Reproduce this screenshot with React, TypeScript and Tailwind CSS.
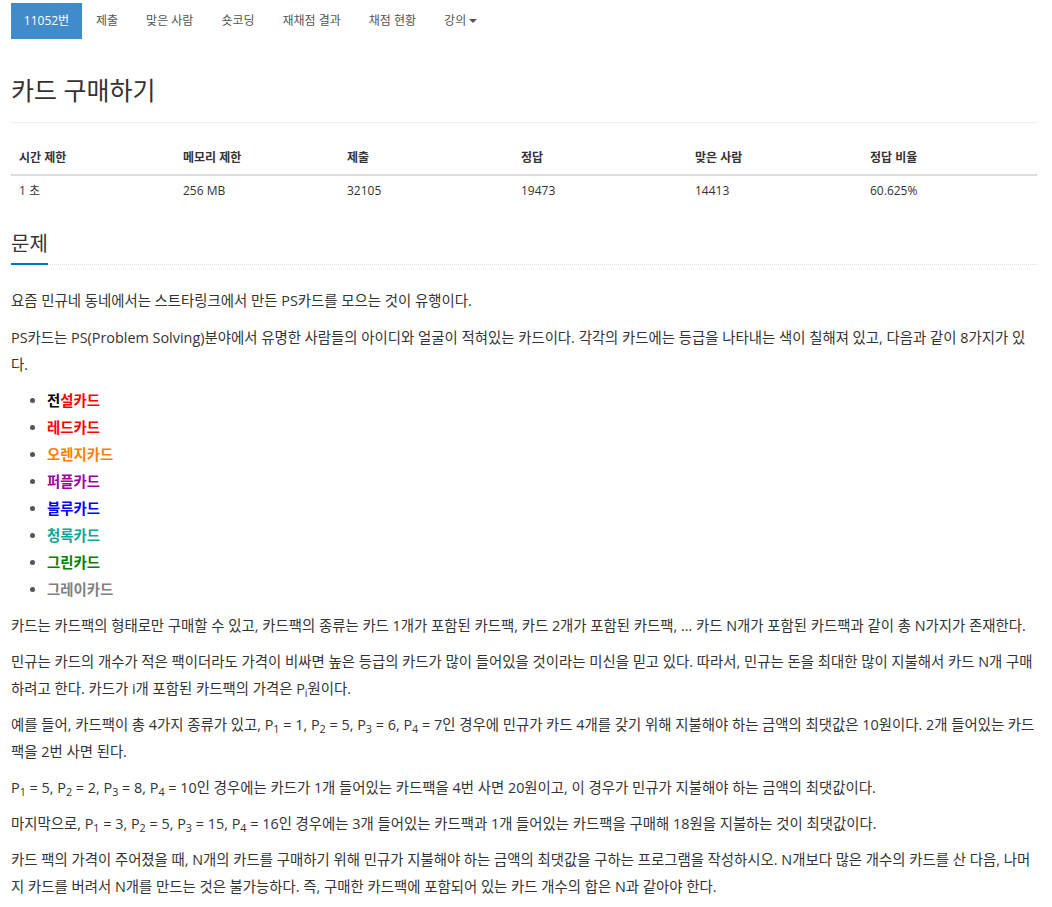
import React from "react";

const navItems = ["제출", "맞은 사람", "숏코딩", "재채점 결과", "채점 현황"];

const cards: { parts: { t: string; c: string }[] }[] = [
  { parts: [{ t: "전", c: "text-[#000000]" }, { t: "설카드", c: "text-[#ff0000]" }] },
  { parts: [{ t: "레드카드", c: "text-[#ff0000]" }] },
  { parts: [{ t: "오렌지카드", c: "text-[#ff8000]" }] },
  { parts: [{ t: "퍼플카드", c: "text-[#a000a0]" }] },
  { parts: [{ t: "블루카드", c: "text-[#0000ff]" }] },
  { parts: [{ t: "청록카드", c: "text-[#10a49a]" }] },
  { parts: [{ t: "그린카드", c: "text-[#008000]" }] },
  { parts: [{ t: "그레이카드", c: "text-[#808080]" }] },
];

function P({ n }: { n: string }) {
  return (
    <>
      P<sub>{n}</sub>
    </>
  );
}

export default function App() {
  return (
    <div className="min-h-[907px] bg-white pl-[11px] pr-[15px] text-[#333] font-['Open_Sans','Noto_Sans_CJK_KR',sans-serif]">
      <nav className="flex items-center pt-[3px] text-[12px]">
        <div className="flex h-[36px] w-[71px] items-center justify-center bg-[#428bca] text-white">11052번</div>
        {navItems.map((n) => (
          <div key={n} className="flex h-[36px] items-center px-[14px] text-[#555]">
            {n}
          </div>
        ))}
        <div className="flex h-[36px] items-center px-[14px] text-[#555]">
          강의
          <span className="ml-[3px] inline-block h-0 w-0 border-x-[4px] border-t-[4px] border-x-transparent border-t-[#555]" />
        </div>
      </nav>

      <h1 className="mt-[36px] border-b border-[#eee] pb-[17px] text-[25px] leading-[30px] font-normal text-[#333]">
        카드 구매하기
      </h1>

      <table className="mt-[17px] w-full border-collapse text-[12px]">
        <thead>
          <tr>
            {["시간 제한", "메모리 제한", "제출", "정답", "맞은 사람", "정답 비율"].map((h, i) => (
              <th
                key={h}
                className={
                  "border-b-2 border-[#ddd] px-[8px] pt-[8px] pb-[6px] text-left font-bold leading-[20px] " +
                  ["w-[164px]", "w-[164px]", "w-[174px]", "w-[174px]", "w-[175px]", ""][i]
                }
              >
                {h}
              </th>
            ))}
          </tr>
        </thead>
        <tbody>
          <tr>
            {["1 초", "256 MB", "32105", "19473", "14413", "60.625%"].map((v) => (
              <td key={v} className="px-[8px] pt-[5px] pb-[8px] leading-[20px]">
                {v}
              </td>
            ))}
          </tr>
        </tbody>
      </table>

      <div className="mt-[21px] border-b border-dotted border-[#ddd]">
        <h2 className="-mb-px inline-block border-b-2 border-[#0076c0] pb-[5px] text-[20px] leading-[28px] font-normal">
          문제
        </h2>
      </div>

      <div className="mt-[22px] text-[14.4px] leading-[27px]">
        <p className="mb-[10px]">요즘 민규네 동네에서는 스트타링크에서 만든 PS카드를 모으는 것이 유행이다.</p>
        <p className="mb-[9px]">
          PS카드는 PS(Problem Solving)분야에서 유명한 사람들의 아이디와 얼굴이 적혀있는 카드이다. 각각의 카드에는 등급을 나타내는 색이 칠해져 있고, 다음과 같이 8가지가 있다.
        </p>
        <ul className="mb-[9px] list-disc pl-[36px] marker:text-[#555]">
          {cards.map((c, i) => (
            <li key={i} className="font-bold">
              {c.parts.map((p, j) => (
                <span key={j} className={p.c}>
                  {p.t}
                </span>
              ))}
            </li>
          ))}
        </ul>
        <p className="mb-[9px]">
          카드는 카드팩의 형태로만 구매할 수 있고, 카드팩의 종류는 카드 1개가 포함된 카드팩, 카드 2개가 포함된 카드팩, ... 카드 N개가 포함된 카드팩과 같이 총 N가지가 존재한다.
        </p>
        <p className="mb-[9px]">
          민규는 카드의 개수가 적은 팩이더라도 가격이 비싸면 높은 등급의 카드가 많이 들어있을 것이라는 미신을 믿고 있다. 따라서, 민규는 돈을 최대한 많이 지불해서 카드 N개 구매하려고 한다. 카드가 i개 포함된 카드팩의 가격은 <P n="i" />원이다.
        </p>
        <p className="mb-[9px]">
          예를 들어, 카드팩이 총 4가지 종류가 있고, <P n="1" /> = 1, <P n="2" /> = 5, <P n="3" /> = 6, <P n="4" /> = 7인 경우에 민규가 카드 4개를 갖기 위해 지불해야 하는 금액의 최댓값은 10원이다. 2개 들어있는 카드팩을 2번 사면 된다.
        </p>
        <p className="mb-[9px]">
          <P n="1" /> = 5, <P n="2" /> = 2, <P n="3" /> = 8, <P n="4" /> = 10인 경우에는 카드가 1개 들어있는 카드팩을 4번 사면 20원이고, 이 경우가 민규가 지불해야 하는 금액의 최댓값이다.
        </p>
        <p className="mb-[9px]">
          마지막으로, <P n="1" /> = 3, <P n="2" /> = 5, <P n="3" /> = 15, <P n="4" /> = 16인 경우에는 3개 들어있는 카드팩과 1개 들어있는 카드팩을 구매해 18원을 지불하는 것이 최댓값이다.
        </p>
        <p className="mb-[9px]">
          카드 팩의 가격이 주어졌을 때, N개의 카드를 구매하기 위해 민규가 지불해야 하는 금액의 최댓값을 구하는 프로그램을 작성하시오. N개보다 많은 개수의 카드를 산 다음, 나머지 카드를 버려서 N개를 만드는 것은 불가능하다. 즉, 구매한 카드팩에 포함되어 있는 카드 개수의 합은 N과 같아야 한다.
        </p>
      </div>
    </div>
  );
}
